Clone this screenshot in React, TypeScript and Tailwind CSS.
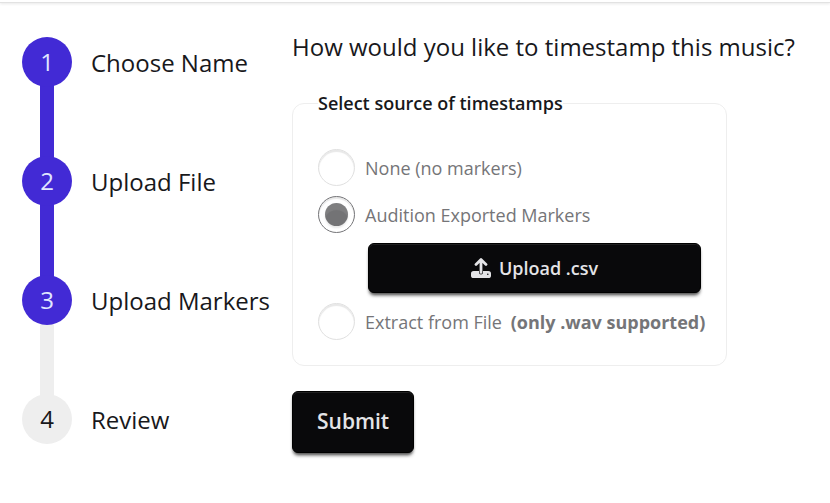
import { useState } from "react";

const steps = [
  { label: "Choose Name", done: true, lineDone: true },
  { label: "Upload File", done: true, lineDone: true },
  { label: "Upload Markers", done: true, lineDone: false },
  { label: "Review", done: false, lineDone: false },
];

const radioClass =
  "size-[37px] shrink-0 appearance-none rounded-full border border-[#e0e0e0] p-[6px] shadow-[inset_0_2px_1px_#00000018] before:block before:size-full before:rounded-full checked:border-[#757578] checked:before:bg-[#737375] checked:before:shadow-[inset_0_8px_1px_-1px_#ffffff16,0_2px_2px_#00000018]";

const buttonClass =
  "flex items-center justify-center rounded-md border border-black bg-[#09090b] font-semibold text-[#e4e4e7] shadow-[inset_0_1px_0_#ffffff18,0_3px_3px_-1px_#00000080,0_4px_4px_-2px_#00000060]";

function UploadIcon() {
  return (
    <svg viewBox="0 0 20 20" className="size-5" aria-hidden="true">
      <rect x="0" y="13" width="20" height="7" rx="2.6" fill="#e4e4e7" />
      <path d="M10 14.6V3" stroke="#09090b" strokeWidth="4" strokeLinecap="round" />
      <path
        d="M10 14.4V2M5 6.4L10 1.6L15 6.4"
        fill="none"
        stroke="#e4e4e7"
        strokeWidth="2.8"
        strokeLinecap="round"
        strokeLinejoin="round"
      />
      <circle cx="16.8" cy="16.3" r="0.8" fill="#09090b" />
    </svg>
  );
}

export default function App() {
  const [source, setSource] = useState("audition");

  return (
    <div className="bg-white pb-12 font-['Open_Sans','Noto_Sans',sans-serif] text-[#18181b]">
      <header className="h-[3px] border-b border-[#e2e2e2] shadow-[0_1px_3px_#00000018]" />
      <main className="flex px-[22px] pt-[26px]">
        <ol className="w-[270px] shrink-0 pt-2 text-2xl">
          {steps.map((step, index) => (
            <li key={step.label} className="flex gap-[19px]">
              <div className="flex flex-col items-center">
                <span
                  className={
                    step.done
                      ? "z-10 flex size-[50px] items-center justify-center rounded-full bg-[#422ad5] text-[#e0e7ff]"
                      : "z-10 flex size-[50px] items-center justify-center rounded-full bg-[#eeeeee]"
                  }
                >
                  {index + 1}
                </span>
                {index < steps.length - 1 && (
                  <span
                    className={
                      step.lineDone
                        ? "-my-1 h-[77px] w-[14px] bg-[#422ad5]"
                        : "-my-1 h-[77px] w-[14px] bg-[#eeeeee]"
                    }
                  />
                )}
              </div>
              <span className="h-[50px] leading-[52px] whitespace-nowrap">{step.label}</span>
            </li>
          ))}
        </ol>
        <form className="min-w-0 flex-1" onSubmit={(event) => event.preventDefault()}>
          <h1 className="text-2xl leading-9 whitespace-nowrap">
            How would you like to timestamp this music?
          </h1>
          <fieldset className="mt-6 max-w-[435px] min-w-0 rounded-xl border border-[#eeeeee] px-[25px] pb-[25px]">
            <legend className="text-lg leading-7 font-semibold">Select source of timestamps</legend>
            <div className="flex flex-col gap-[10px] pt-8 text-lg text-[#757578]">
              <label className="flex items-center gap-[10px]">
                <input
                  type="radio"
                  name="source"
                  className={radioClass}
                  checked={source === "none"}
                  onChange={() => setSource("none")}
                />
                None (no markers)
              </label>
              <label className="flex items-center gap-[10px]">
                <input
                  type="radio"
                  name="source"
                  className={radioClass}
                  checked={source === "audition"}
                  onChange={() => setSource("audition")}
                />
                Audition Exported Markers
              </label>
              <button type="button" className={`${buttonClass} ml-[50px] h-[50px] gap-2`}>
                <UploadIcon />
                Upload .csv
              </button>
              <label className="flex items-center gap-[10px] whitespace-nowrap">
                <input
                  type="radio"
                  name="source"
                  className={radioClass}
                  checked={source === "file"}
                  onChange={() => setSource("file")}
                />
                <span>
                  Extract from File <strong className="ml-1 font-bold">(only .wav supported)</strong>
                </span>
              </label>
            </div>
          </fieldset>
          <button type="submit" className={`${buttonClass} mt-[25px] h-[62px] px-6 text-[21px]`}>
            Submit
          </button>
        </form>
      </main>
    </div>
  );
}
